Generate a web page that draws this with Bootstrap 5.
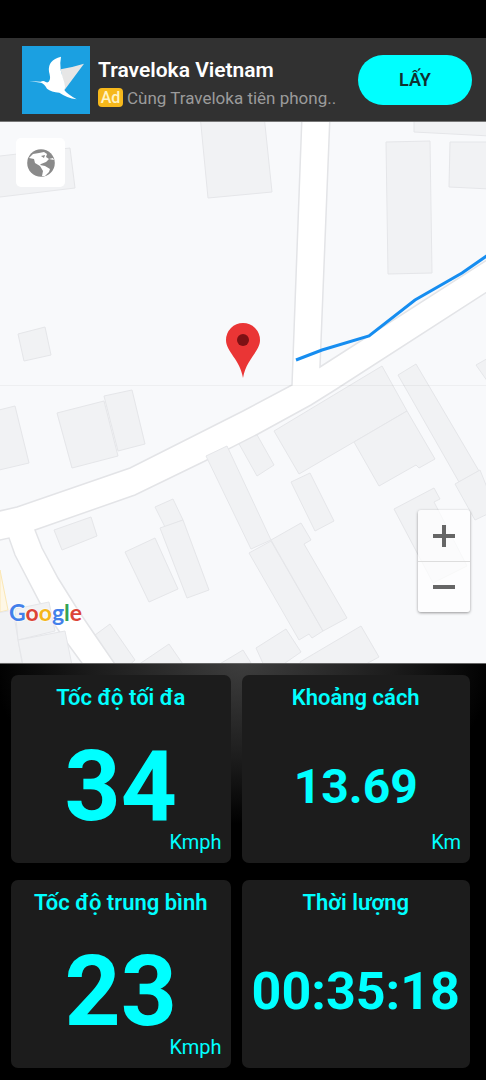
<!DOCTYPE html>
<html lang="vi">
<head>
<meta charset="utf-8">
<meta name="viewport" content="width=device-width, initial-scale=1">
<title>Speedometer</title>
<link href="https://cdn.jsdelivr.net/npm/bootstrap@5.3.0/dist/css/bootstrap.min.css" rel="stylesheet">
<style>
  :root { --cyan: #00ffff; }
  body { font-family: Roboto, "Noto Sans", sans-serif; background: #000; }
  .status-strip { height: 38px; }
  .ad-bar { background: #313131; height: 84px; padding: 0 14px 0 22px; border-bottom: 1px solid #777; }
  .ad-logo { width: 68px; height: 68px; }
  .ad-title { font-size: 21px; line-height: 28px; font-weight: 600; color: #fff; }
  .ad-text { font-size: 17px; line-height: 28px; color: #9b9b9b; }
  .ad-tag { background: #f6b81c; color: #fff3c4; font-size: 16px; line-height: 19px; font-weight: 500; border-radius: 4px; width: 25px; }
  .ad-btn, .ad-btn:hover { background: var(--cyan); color: #10302f; width: 114px; height: 50px; font-size: 18px; font-weight: 600; }
  .map-area { background: #f8f9fb; min-height: 420px; }
  .roads { fill: #fff; stroke: #e3e4e7; stroke-width: 1.5; }
  .houses { fill: #f1f2f4; stroke: #e5e6e9; stroke-width: 1; }
  .route { fill: none; stroke: #168df0; stroke-width: 3; }
  .layer-btn { top: 16px; left: 16px; width: 49px; height: 49px; background: #fff; border-radius: 5px; }
  .zoom-box { right: 16px; bottom: 51px; width: 52px; border-radius: 3px; background: rgba(255,255,255,.7); box-shadow: 0 1px 3px rgba(0,0,0,.4); }
  .zoom-box button { height: 51px; }
  .zoom-box button + button { border-top: 1px solid #ddd !important; }
  .brand { left: 9px; bottom: 34px; font-family: Lato, sans-serif; font-size: 23px; line-height: 34px; font-weight: 700; text-shadow: 0 0 2px #fff, 0 0 2px #fff; }
  .g-blue { color: #4380ea; } .g-red { color: #dc4437; } .g-yellow { color: #f4b61a; } .g-green { color: #34a353; }
  .dash { display: grid; grid-template-columns: minmax(0, 220fr) minmax(0, 229fr); gap: 17px 11px; padding: 11px 16px 12px 11px; border-top: 1px solid #666;
    background: radial-gradient(ellipse 250px 160px at 50% 0, #3d3d3d, #1c1c1c 60%, #000); }
  .tile { background: #1c1c1c; color: var(--cyan); border-radius: 7px; height: 188px; }
  .tile h2 { font-size: 22px; line-height: 26px; font-weight: 600; margin: 10px 0 0; }
  .digits { font-family: Roboto, sans-serif; font-weight: 700; line-height: 86px; }
  .d-lg { font-size: 98px; } .d-sm { font-size: 48px; } .d-md { font-size: 52px; }
  .unit { right: 9px; bottom: 8px; font-size: 20px; line-height: 26px; }
</style>
</head>
<body>
<div class="min-vh-100 d-flex flex-column">
  <div class="status-strip"></div>
  <header class="ad-bar d-flex align-items-center">
    <svg class="ad-logo flex-shrink-0" viewBox="0 0 204 204" aria-hidden="true">
      <rect width="204" height="204" fill="#1ba0e1"/>
      <path d="M116 70Q150 64 186 53L127 133Z" fill="#e6e6e6"/>
      <path d="M22 105L56 107Q64 102 71 108Q80 112 83 102Q86 94 81 77Q76 42 117 32Q113 52 116 72Q121 92 127 110Q131 124 127 132Q134 143 164 160Q134 155 112 140Q88 138 75 128Q67 113 57 110Z" fill="#fff"/>
    </svg>
    <div class="flex-grow-1 ms-2 pt-2">
      <div class="ad-title text-nowrap">Traveloka Vietnam</div>
      <div class="ad-text d-flex align-items-center text-nowrap"><span class="ad-tag text-center me-1">Ad</span>Cùng Traveloka tiên phong..</div>
    </div>
    <button type="button" class="btn ad-btn rounded-pill border-0 p-0 flex-shrink-0">LẤY</button>
  </header>

  <main class="map-area position-relative flex-grow-1 overflow-hidden">
    <svg class="position-absolute w-100 h-100" viewBox="0 122 486 541" preserveAspectRatio="xMidYMid slice" role="img" aria-label="Map">
      <path d="M0 570L8 610L0 612Z" fill="#fef7e6" stroke="#fbe7b5"/>
      <g class="houses">
        <path d="M0 156L70 148L75 188L0 197"/>
        <path d="M200 115L208 198L272 192L264 115Z"/>
        <path d="M414 115V132L490 136V115Z"/>
        <path d="M386 142L430 141L432 273L388 274Z"/>
        <path d="M450 142H490V189L449 187Z"/>
        <path d="M18 334L45 327L51 355L24 361Z"/>
        <path d="M-5 411L15 406L29 463L-5 471Z"/>
        <path d="M57 413L104 401L118 456L72 468Z"/>
        <path d="M104 396L132 390L145 444L118 451Z"/>
        <path d="M54 530L91 517L97 536L62 550Z"/>
        <path d="M155 507L173 499L183 520L165 527Z"/>
        <path d="M160 528L183 520L209 590L187 598Z"/>
        <path d="M125 552L155 538L178 589L149 602Z"/>
        <path d="M-3 613L13 610L22 663H-3Z"/>
        <path d="M116 670L95 635L110 624L135 660L124 670Z"/>
        <path d="M135 667L169 644L187 670Z"/>
        <path d="M274 431L382 366L407 411L299 474Z"/>
        <path d="M354 442L407 411L435 459L419 468L416 465L379 486Z"/>
        <path d="M398 375L416 364L479 471L459 482Z"/>
        <path d="M455 484L480 470L496 510L475 520Z"/>
        <path d="M476 365L490 357V385Z"/>
        <path d="M238 442L256 433L274 465L257 476Z"/>
        <path d="M291 482L310 473L334 521L315 531Z"/>
        <path d="M249 553L271 541L323 631L312 638L309 634L299 640Z"/>
        <path d="M271 540L301 523L311 540L304 544L347 618L323 631Z"/>
        <path d="M394 509L434 488L440 499L434 502L467 566L433 583Z"/>
        <path d="M256 648L286 629L301 652L275 670H266Z"/>
        <path d="M300 662L361 626L379 657L355 670H304Z"/>
        <path d="M218 665L243 650L251 663Z"/>
      </g>
      <g class="roads">
        <path d="M302 115L292 385L243 411L130 468L17 507L-5 512V541L9 538L15 555L40 603L65 640L87 670H119L95 635L78 610L58 578L42 548L35 530L135 495L205 461L258 434L311 405L335 390L490 290V258L320 367L330 115Z"/>
      </g>
      <g class="houses">
        <path d="M206 456L227 446L271 540L251 549Z"/>
        <path d="M15 609L49 602L55 631L18 640Z"/>
        <path d="M18 640L65 631L73 670H24Z"/>
      </g>
      <path d="M0 385.500H486" stroke="#000" stroke-opacity=".04"/>
      <path class="route" d="M296 360L322 350L369 336L415 300L462 273L488 255"/>
      <path d="M243 378C240 359 226 352 226 340A17 17 0 0 1 260 340C260 352 246 359 243 378Z" fill="#ea3535"/>
      <circle cx="243" cy="340" r="6" fill="#7d1114"/>
    </svg>
    <button type="button" class="layer-btn btn border-0 p-0 position-absolute d-flex align-items-center justify-content-center" aria-label="Map type">
      <svg width="28" height="28" viewBox="0 0 28 28" aria-hidden="true">
        <circle cx="14" cy="14" r="13.800" fill="#8a8a8a"/>
        <path d="M2 9L6 5L12 4L17 3L20 5L19 8L22 10L26 9L27 11L22 10L19 13L14 15L13 16L18 17L23 20L22 23L18 27H15L16 22L13 17L8 14L7 10Z" fill="#fff"/>
        <path d="M14 7L18 6L17 9Z" fill="#8a8a8a"/>
      </svg>
    </button>
    <div class="zoom-box position-absolute d-flex flex-column">
      <button type="button" class="btn border-0 p-0 rounded-0 d-flex align-items-center justify-content-center" aria-label="Zoom in"><svg width="24" height="24"><path d="M12 1V23M1 12H23" stroke="#666" stroke-width="4"/></svg></button>
      <button type="button" class="btn border-0 p-0 rounded-0 d-flex align-items-center justify-content-center" aria-label="Zoom out"><svg width="24" height="24"><path d="M1 12H23" stroke="#666" stroke-width="4"/></svg></button>
    </div>
    <div class="brand position-absolute"><span class="g-blue">G</span><span class="g-red">o</span><span class="g-yellow">o</span><span class="g-blue">g</span><span class="g-green">l</span><span class="g-red">e</span></div>
  </main>

  <section class="dash">
    <article class="tile position-relative text-center d-flex flex-column">
      <h2>Tốc độ tối đa</h2>
      <div class="digits d-lg my-auto">34</div>
      <div class="unit position-absolute">Kmph</div>
    </article>
    <article class="tile position-relative text-center d-flex flex-column">
      <h2>Khoảng cách</h2>
      <div class="digits d-sm my-auto">13.69</div>
      <div class="unit position-absolute">Km</div>
    </article>
    <article class="tile position-relative text-center d-flex flex-column">
      <h2>Tốc độ trung bình</h2>
      <div class="digits d-lg my-auto">23</div>
      <div class="unit position-absolute">Kmph</div>
    </article>
    <article class="tile position-relative text-center d-flex flex-column">
      <h2>Thời lượng</h2>
      <div class="digits d-md my-auto">00:35:18</div>
    </article>
  </section>
</div>
<script src="https://cdn.jsdelivr.net/npm/bootstrap@5.3.0/dist/js/bootstrap.bundle.min.js"></script>
</body>
</html>
